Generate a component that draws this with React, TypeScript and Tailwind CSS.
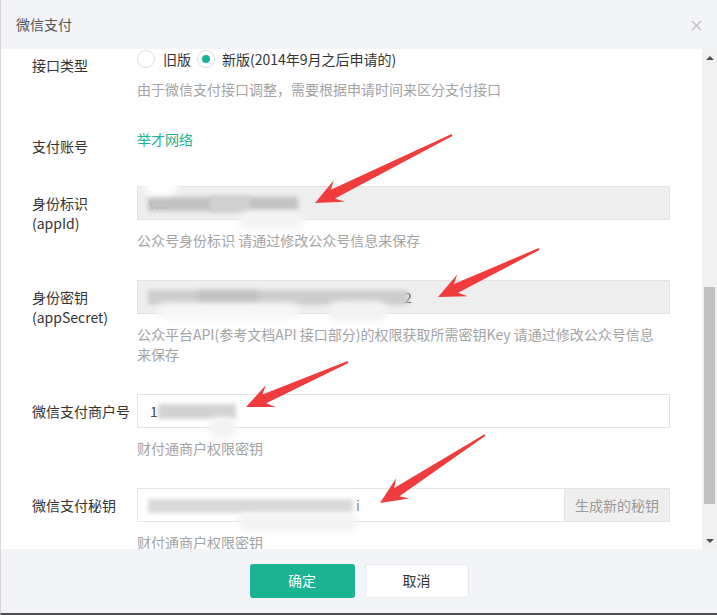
import type { ReactNode } from "react"

type Pt = [number, number]

// tapered annotation arrow, tail -> tip
function arrowPoints(tail: Pt, tip: Pt) {
    const [tx, ty] = tail
    const [hx, hy] = tip
    const len = Math.hypot(hx - tx, hy - ty)
    const ux = (hx - tx) / len
    const uy = (hy - ty) / len
    const nx = -uy
    const ny = ux
    const p = (along: number, side: number) =>
        `${(hx - ux * along + nx * side).toFixed(1)},${(hy - uy * along + ny * side).toFixed(1)}`
    return [
        p(len, 1),
        p(20, 4.8),
        p(27, 12),
        p(0, 0),
        p(27, -12),
        p(20, -4.8),
        p(len, -1),
    ].join(" ")
}

const arrows: [Pt, Pt][] = [
    [[451, 135], [314, 203]],
    [[538, 249], [437, 297]],
    [[347, 362], [245, 407]],
    [[484, 435], [379, 503]],
]

function Row({
    label,
    children,
}: {
    label: ReactNode
    children: ReactNode
}) {
    return (
        <div className="flex mb-[30px]">
            <div className="w-[105px] shrink-0 pt-[7px] text-[14px] leading-[20px] text-[#333]">
                {label}
            </div>
            <div className="flex-1 min-w-0">{children}</div>
        </div>
    )
}

function Help({ children }: { children: ReactNode }) {
    return (
        <p className="mt-[10px] text-[14px] leading-[20px] text-[#a3a3a3]">
            {children}
        </p>
    )
}

function Blob({ className }: { className: string }) {
    return <div className={`absolute pointer-events-none ${className}`} />
}

function Radio({ checked }: { checked?: boolean }) {
    return (
        <span className="w-[18px] h-[18px] rounded-full border border-[#dedede] bg-white flex items-center justify-center shrink-0">
            {checked && <span className="w-[8px] h-[8px] rounded-full bg-[#1ab394]" />}
        </span>
    )
}

export default function App() {
    return (
        <div className="relative w-[717px] h-[615px] flex flex-col bg-white border-l border-[#d6d6d6] border-b-2 border-b-[#4d4d4d] overflow-hidden font-['Noto_Sans_CJK_SC','Noto_Sans',sans-serif]">
            <div className="h-[49px] shrink-0 bg-[#f3f4f7] flex items-center justify-between pl-[15px] pr-[15px]">
                <span className="text-[14px] text-[#555]">微信支付</span>
                <svg width="11" height="11" viewBox="0 0 11 11" className="mt-[1px]">
                    <path d="M1 1L10 10M10 1L1 10" stroke="#c2c2c2" strokeWidth="1.4" />
                </svg>
            </div>

            <div className="h-[500px] shrink-0 flex">
                <div className="flex-1 overflow-hidden pl-[31px] pr-[32px]">
                    <div className="flex mb-[30px]">
                        <div className="w-[105px] shrink-0 pt-[6px] text-[14px] leading-[20px] text-[#333]">
                            接口类型
                        </div>
                        <div className="flex-1">
                            <div className="flex items-center h-[20px] text-[14px] text-[#333]">
                                <Radio />
                                <span className="ml-[8px]">旧版</span>
                                <span className="ml-[6px]">
                                    <Radio checked />
                                </span>
                                <span className="ml-[7px]">新版(2014年9月之后申请的)</span>
                            </div>
                            <Help>由于微信支付接口调整，需要根据申请时间来区分支付接口</Help>
                        </div>
                    </div>

                    <Row label="支付账号">
                        <span className="block text-[14px] leading-[20px] text-[#1ab394]">举才网络</span>
                    </Row>

                    <Row label={<>身份标识<br />(appId)</>}>
                        <div className="relative h-[34px] border border-[#e3e3e3] bg-[#eeeeee] px-[11px] flex items-center text-[14px] text-[#555]">
                            <span>wx</span>
                            <Blob className="left-[10px] top-[10px] w-[150px] h-[14px] bg-[#c2c2c2] blur-[2px]" />
                            <Blob className="left-[72px] top-[9px] w-[40px] h-[16px] bg-[#d2d2d2] blur-[2px]" />
                            <Blob className="left-[6px] top-[-10px] w-[34px] h-[18px] rounded-full bg-white blur-[3px]" />
                            <Blob className="left-[100px] top-[24px] w-[66px] h-[18px] rounded-full bg-[#f4f4f4] blur-[3px]" />
                        </div>
                        <Help>公众号身份标识 请通过修改公众号信息来保存</Help>
                    </Row>

                    <Row label={<>身份密钥<br />(appSecret)</>}>
                        <div className="relative h-[34px] border border-[#e3e3e3] bg-[#eeeeee] px-[11px] flex items-center text-[14px] text-[#555]">
                            <span className="ml-[255px]">2</span>
                            <Blob className="left-[10px] top-[9px] w-[260px] h-[15px] bg-[#cdcdcd] blur-[2px]" />
                            <Blob className="left-[60px] top-[10px] w-[60px] h-[13px] bg-[#c2c2c2] blur-[2px]" />
                            <Blob className="left-[20px] top-[22px] w-[140px] h-[16px] rounded-full bg-[#f6f6f6] blur-[3px]" />
                            <Blob className="left-[190px] top-[20px] w-[60px] h-[20px] rounded-full bg-[#f2f2f2] blur-[3px]" />
                        </div>
                        <Help>
                            公众平台API(参考文档API 接口部分)的权限获取所需密钥Key 请通过修改公众号信息
                            <br />
                            来保存
                        </Help>
                    </Row>

                    <Row label="微信支付商户号">
                        <div className="relative h-[34px] border border-[#e3e3e3] bg-white px-[12px] flex items-center text-[14px] text-[#444]">
                            <span>1</span>
                            <Blob className="left-[20px] top-[9px] w-[78px] h-[15px] bg-[#d2d2d2] blur-[2px]" />
                            <Blob className="left-[70px] top-[22px] w-[28px] h-[22px] rounded-full bg-[#f3f3f3] blur-[3px]" />
                        </div>
                        <Help>财付通商户权限密钥</Help>
                    </Row>

                    <Row label="微信支付秘钥">
                        <div className="flex h-[34px]">
                            <div className="relative flex-1 border border-[#e3e3e3] bg-white px-[12px] flex items-center text-[14px] text-[#888]">
                                <span className="ml-[206px]">i</span>
                                <Blob className="left-[10px] top-[10px] w-[205px] h-[14px] bg-[#d8d8d8] blur-[2px]" />
                                <Blob className="left-[100px] top-[24px] w-[120px] h-[18px] rounded-full bg-[#f3f3f3] blur-[3px]" />
                            </div>
                            <div className="w-[105px] shrink-0 border border-l-0 border-[#e3e3e3] bg-[#eeeeee] flex items-center justify-center text-[14px] text-[#9a9a9a]">
                                生成新的秘钥
                            </div>
                        </div>
                        <Help>财付通商户权限密钥</Help>
                    </Row>
                </div>

                {/* scrollbar */}
                <div className="w-[15px] shrink-0 bg-[#f1f1f1] flex flex-col">
                    <div className="h-[17px] flex items-center justify-center">
                        <span className="w-0 h-0 border-x-[4px] border-x-transparent border-b-[4px] border-b-[#505050]" />
                    </div>
                    <div className="flex-1 flex flex-col px-[2px]">
                        <div className="h-[221px]" />
                        <div className="h-[217px] bg-[#c1c1c1]" />
                    </div>
                    <div className="h-[17px] flex items-center justify-center">
                        <span className="w-0 h-0 border-x-[4px] border-x-transparent border-t-[4px] border-t-[#505050]" />
                    </div>
                </div>
            </div>

            <div className="flex-1 bg-[#f3f4f7] flex items-center justify-center gap-[10px] pb-[1px]">
                <button className="w-[105px] h-[34px] rounded-[3px] bg-[#1ab394] text-white text-[14px]">
                    确定
                </button>
                <button className="w-[104px] h-[34px] rounded-[3px] bg-white border border-[#e7eaec] text-[#333] text-[14px]">
                    取消
                </button>
            </div>

            <svg className="absolute inset-0 pointer-events-none" width="717" height="615">
                {arrows.map(([tail, tip], i) => (
                    <polygon key={i} points={arrowPoints(tail, tip)} fill="#f03c3c" />
                ))}
            </svg>
        </div>
    )
}
